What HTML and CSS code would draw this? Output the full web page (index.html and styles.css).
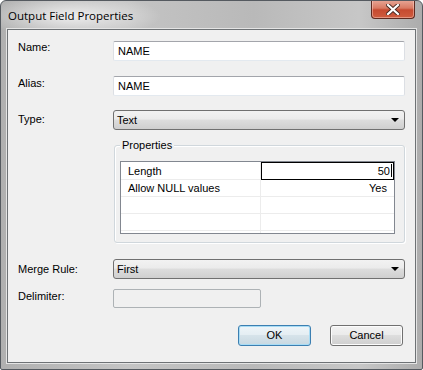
FILE: index.html
```html
<!DOCTYPE html>
<html>
<head>
    <meta charset="UTF-8">
    <title>Output Field Properties</title>
    <link rel="stylesheet" href="styles.css">
</head>
<body>
    <div class="window">
        <div class="titlebar">
            <span class="title">Output Field Properties</span>
            <div class="close">
                <svg width="14" height="11" viewBox="0 0 14 11">
                    <path d="M2 1 L12 10 M12 1 L2 10" stroke="#4a2a22" stroke-width="4" stroke-linecap="square"/>
                    <path d="M2 1 L12 10 M12 1 L2 10" stroke="#ffffff" stroke-width="2.2" stroke-linecap="square"/>
                </svg>
            </div>
        </div>
        <div class="client">
            <div class="row row-name">
                <span class="label">Name:</span>
                <div class="textbox wide">NAME</div>
            </div>
            <div class="row row-alias">
                <span class="label">Alias:</span>
                <div class="textbox wide">NAME</div>
            </div>
            <div class="row row-type">
                <span class="label">Type:</span>
                <div class="combo wide">Text<span class="arrow"></span></div>
            </div>

            <div class="groupbox">
                <span class="legend">Properties</span>
                <div class="grid-wrap">
                    <table class="grid">
                        <tr class="first">
                            <td class="prop">Length</td>
                            <td class="val editing">50<span class="caret"></span></td>
                        </tr>
                        <tr>
                            <td class="prop">Allow NULL values</td>
                            <td class="val">Yes</td>
                        </tr>
                        <tr><td class="prop"></td><td class="val"></td></tr>
                        <tr><td class="prop"></td><td class="val"></td></tr>
                        <tr><td class="prop"></td><td class="val"></td></tr>
                    </table>
                </div>
            </div>

            <div class="row row-merge">
                <span class="label">Merge Rule:</span>
                <div class="combo wide">First<span class="arrow"></span></div>
            </div>
            <div class="row row-delim">
                <span class="label">Delimiter:</span>
                <div class="textbox narrow disabled"></div>
            </div>

            <div class="buttons">
                <div class="btn default">OK</div>
                <div class="btn">Cancel</div>
            </div>
        </div>
    </div>
</body>
</html>
```

FILE: styles.css
```css
body {
    margin: 0;
    font-family: "Liberation Sans", sans-serif;
    font-size: 11px;
    color: #000;
    background: #ffffff;
}
.window {
    width: 423px;
    height: 370px;
    box-sizing: border-box;
    border: 1px solid #555a60;
    border-radius: 6px 6px 2px 2px;
    background:
        radial-gradient(ellipse 90px 22px at 70px 15px, rgba(255,255,255,0.75), rgba(255,255,255,0) 100%),
        linear-gradient(90deg, #b0b0b0 0%, #c4c4c4 30%, #b9b9b9 60%, #c7c7c7 85%, #acacac 100%);
    display: flex;
    flex-direction: column;
    overflow: hidden;
}
.titlebar {
    height: 28px;
    display: flex;
    align-items: flex-start;
    justify-content: space-between;
    padding: 0 7px 0 7px;
}
.title {
    font-family: "Open Sans", sans-serif;
    font-size: 11.5px;
    color: #000;
    margin-top: 7px;
}
.close {
    width: 44px;
    height: 19px;
    margin-top: -1px;
    box-sizing: border-box;
    border: 1px solid #5e2a20;
    border-top: none;
    border-radius: 0 0 4px 4px;
    background: linear-gradient(#e8a898 0%, #d97a63 45%, #c64a30 55%, #cf5d3f 100%);
    box-shadow: inset 0 0 0 1px rgba(255,220,210,0.45);
    display: flex;
    align-items: center;
    justify-content: center;
}
.client {
    margin: 0 6px 6px 6px;
    flex: 1;
    border: 1px solid #6e7275;
    box-shadow: 0 0 0 1px #e4e4e4;
    background: #f0f0f0;
    padding: 0 10px 0 10px;
    display: flex;
    flex-direction: column;
}
.row {
    display: flex;
    align-items: flex-start;
}
.label {
    width: 95px;
    flex: none;
}
.row-name { margin-top: 11px; }
.row-alias { margin-top: 15px; }
.row-type { margin-top: 14px; }
.row-name .label { padding-top: 0; }
.row-alias .label { padding-top: 1px; }
.row-type .label { padding-top: 3px; }
.row-merge { margin-top: 16px; align-items: center; }
.row-delim { margin-top: 10px; }
.row-delim .label { padding-top: 1px; }

.wide { width: 293px; }
.narrow { width: 148px; }

.textbox {
    height: 20px;
    box-sizing: border-box;
    background: #fff;
    border: 1px solid;
    border-color: #a3a5ab #dcdfe4 #e3e9ef #dcdfe4;
    border-radius: 2px;
    padding: 3px 0 0 4px;
}
.textbox.disabled {
    background: #f0f0f0;
    border-color: #adb2b5;
    height: 19px;
}
.combo {
    height: 20px;
    box-sizing: border-box;
    border: 1px solid #707070;
    border-radius: 3px;
    background: linear-gradient(#f2f2f2 0%, #ebebeb 45%, #dddddd 50%, #cfcfcf 100%);
    padding: 3px 0 0 3px;
    position: relative;
}
.arrow {
    position: absolute;
    right: 5px;
    top: 7px;
    width: 0;
    height: 0;
    border-left: 4px solid transparent;
    border-right: 4px solid transparent;
    border-top: 4px solid #000;
}

.groupbox {
    margin: 15px 0 0 96px;
    width: 291px;
    height: 98px;
    box-sizing: border-box;
    border: 1px solid #d0d7dc;
    border-radius: 3px;
    box-shadow: inset 1px 1px 0 #fff, 1px 1px 0 #fff;
    position: relative;
    padding: 15px 0 0 5px;
}
.legend {
    position: absolute;
    left: 5px;
    top: -7px;
    background: #f0f0f0;
    padding: 0 2px;
}
.grid-wrap {
    width: 275px;
    height: 73px;
    box-sizing: border-box;
    background: #fff;
    border: 1px solid #828790;
    overflow: hidden;
}
.grid {
    border-collapse: collapse;
    width: 100%;
}
.grid td {
    height: 16px;
    padding: 0;
    border-bottom: 1px solid #ececec;
    line-height: 16px;
}
.grid tr.first td {
    height: 17px;
}
.prop {
    width: 132px;
    padding-left: 7px !important;
    border-right: 1px solid #ececec;
}
.val {
    text-align: right;
    padding-right: 7px !important;
    box-sizing: border-box;
}
.val.editing {
    outline: 1px solid #000;
    outline-offset: -1px;
    padding-right: 2px !important;
}
.caret {
    display: inline-block;
    width: 1px;
    height: 13px;
    background: #000;
    vertical-align: -2px;
    margin-left: 1px;
}

.buttons {
    display: flex;
    justify-content: flex-end;
    gap: 19px;
    margin-top: 17px;
    padding-right: 2px;
}
.btn {
    width: 73px;
    height: 21px;
    box-sizing: border-box;
    border: 1px solid #707070;
    border-radius: 3px;
    background: linear-gradient(#f2f2f2 0%, #ebebeb 45%, #dddddd 50%, #cfcfcf 100%);
    box-shadow: inset 0 0 0 1px #fcfcfc;
    text-align: center;
    line-height: 19px;
}
.btn.default {
    border-color: #3c7fb1;
    box-shadow: inset 0 0 0 1px #a8dcf5;
    background: linear-gradient(#eef5f9 0%, #e5eef3 45%, #d6e3ea 50%, #c8d8e1 100%);
}
```
